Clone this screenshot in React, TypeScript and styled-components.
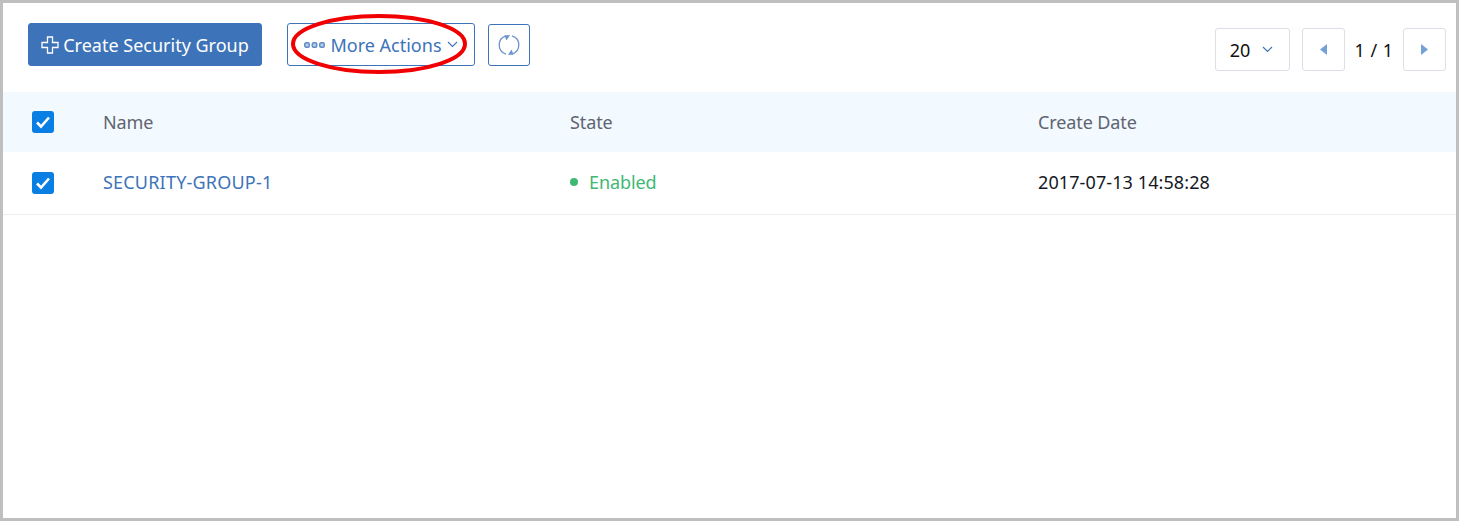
import * as React from 'react';
import styled, { createGlobalStyle } from 'styled-components';

const GlobalStyle = createGlobalStyle`
	html, body {
		margin: 0;
		padding: 0;
		background: #fff;
		font-family: 'Noto Sans', 'Open Sans', sans-serif;
	}
`;

const Page = styled.div`
	position: relative;
	box-sizing: border-box;
	width: 1459px;
	height: 521px;
	border: 3px solid #bfbfbf;
	overflow: hidden;
`;

const Toolbar = styled.div`
	display: flex;
	align-items: flex-start;
	height: 89px;
	box-sizing: border-box;
	padding: 20px 10px 0 25px;
`;

const BaseButton = styled.button`
	display: flex;
	align-items: center;
	justify-content: center;
	box-sizing: border-box;
	padding: 0;
	border-radius: 3px;
	font-family: inherit;
	font-size: 18px;
	letter-spacing: 0;
`;

const PrimaryButton = styled(BaseButton)`
	width: 234px;
	height: 43px;
	gap: 4px;
	background: #3d73b8;
	border: 1px solid #3d73b8;
	color: #fff;
`;

const OutlineButton = styled(BaseButton)`
	width: 188px;
	height: 43px;
	margin-left: 25px;
	gap: 5px;
	background: #fff;
	border: 1px solid #3d73b8;
	color: #3d73b8;
`;

const RefreshButton = styled(BaseButton)`
	width: 42px;
	height: 42px;
	margin: 1px 0 0 13px;
	background: #fff;
	border: 1px solid #3d73b8;
`;

const Pager = styled.div`
	display: flex;
	align-items: center;
	margin: 5px 0 0 auto;
`;

const PageSize = styled(BaseButton)`
	width: 75px;
	height: 43px;
	gap: 12px;
	padding-right: 2px;
	margin-right: 12px;
	background: #fff;
	border: 1px solid #dcdfe6;
	color: #111;
`;

const PageButton = styled(BaseButton)`
	width: 43px;
	height: 43px;
	background: #fff;
	border: 1px solid #dcdfe6;
`;

const PageCount = styled.span`
	width: 58px;
	text-align: center;
	font-size: 18px;
	letter-spacing: 0.5px;
	color: #111;
`;

const Row = styled.div<{ $head?: boolean }>`
	display: grid;
	grid-template-columns: 100px 467px 468px 1fr;
	align-items: center;
	box-sizing: border-box;
	height: ${(p) => (p.$head ? '60px' : '63px')};
	padding-bottom: ${(p) => (p.$head ? '0' : '2px')};
	background: ${(p) => (p.$head ? '#f2f9ff' : '#fff')};
	border-bottom: ${(p) => (p.$head ? 'none' : '1px solid #eeeeee')};
	font-size: 18px;
	letter-spacing: -0.1px;
`;

const CheckCell = styled.div<{ $body?: boolean }>`
	padding-left: 29px;
	display: flex;
	margin-top: ${(p) => (p.$body ? '2px' : '0')};
`;

const CheckBox = styled.span`
	display: flex;
	align-items: center;
	justify-content: center;
	width: 22px;
	height: 22px;
	border-radius: 3px;
	background: #0a7fe3;
`;

const HeadCell = styled.div`
	color: #5f6470;
`;

const NameLink = styled.a`
	color: #3d73b8;
	text-decoration: none;
	letter-spacing: 0.2px;
`;

const StateCell = styled.div`
	display: flex;
	align-items: center;
	gap: 11px;
	color: #3fb873;
`;

const Dot = styled.span`
	width: 8px;
	height: 8px;
	border-radius: 50%;
	background: #3fb873;
`;

const DateCell = styled.div`
	color: #14181f;
	letter-spacing: 0.1px;
`;

const Annotation = styled.svg`
	position: absolute;
	left: 285px;
	top: 8px;
	pointer-events: none;
`;

const Check = () => (
	<svg width="16" height="14" viewBox="0 0 16 14" fill="none">
		<path d="M2 7.5L6 11.5L14 2.5" stroke="#fff" strokeWidth="2.6" />
	</svg>
);

const Chevron = () => (
	<svg width="11" height="7" viewBox="0 0 11 7" fill="none">
		<path d="M1 1L5.5 5.5L10 1" stroke="#3d73b8" strokeWidth="1.1" />
	</svg>
);

const App = () => (
	<Page>
		<GlobalStyle />
		<Toolbar>
			<PrimaryButton>
				<svg width="18" height="18" viewBox="0 0 18 18" fill="none">
					<path d="M6.5 1H11.5V6.5H17V11.5H11.5V17H6.5V11.5H1V6.5H6.5Z" stroke="#fff" strokeWidth="1.3" />
				</svg>
				Create Security Group
			</PrimaryButton>
			<OutlineButton>
				<svg width="21" height="6" viewBox="0 0 21 6">
					<rect x="0.7" y="0.7" width="4.6" height="4.6" rx="1.5" fill="#b4cbe8" stroke="#5f8ac4" strokeWidth="1.4" />
					<rect x="8.2" y="0.7" width="4.6" height="4.6" rx="1.5" fill="#b4cbe8" stroke="#5f8ac4" strokeWidth="1.4" />
					<rect x="15.7" y="0.7" width="4.6" height="4.6" rx="1.5" fill="#b4cbe8" stroke="#5f8ac4" strokeWidth="1.4" />
				</svg>
				More Actions
				<Chevron />
			</OutlineButton>
			<RefreshButton>
				<svg width="22" height="22" viewBox="0 0 22 22" fill="none">
					<path d="M8 1.9A9.5 9.5 0 0 0 8 20.1" stroke="#6a94cb" strokeWidth="1.3" />
					<path d="M14 20.1A9.5 9.5 0 0 0 14 1.9" stroke="#6a94cb" strokeWidth="1.3" />
					<path d="M6.5 1.5L12 1L8.5 6.5Z" fill="#6a94cb" />
					<path d="M15.5 20.5L10 21L13.5 15.5Z" fill="#6a94cb" />
				</svg>
			</RefreshButton>
			<Pager>
				<PageSize>
					20
					<Chevron />
				</PageSize>
				<PageButton>
					<svg width="7" height="11" viewBox="0 0 7 11">
						<path d="M7 0V11L0 5.5Z" fill="#75a0d6" />
					</svg>
				</PageButton>
				<PageCount>1 / 1</PageCount>
				<PageButton>
					<svg width="7" height="11" viewBox="0 0 7 11">
						<path d="M0 0V11L7 5.5Z" fill="#75a0d6" />
					</svg>
				</PageButton>
			</Pager>
		</Toolbar>
		<Row $head>
			<CheckCell>
				<CheckBox>
					<Check />
				</CheckBox>
			</CheckCell>
			<HeadCell>Name</HeadCell>
			<HeadCell>State</HeadCell>
			<HeadCell>Create Date</HeadCell>
		</Row>
		<Row>
			<CheckCell $body>
				<CheckBox>
					<Check />
				</CheckBox>
			</CheckCell>
			<div>
				<NameLink>SECURITY-GROUP-1</NameLink>
			</div>
			<StateCell>
				<Dot />
				Enabled
			</StateCell>
			<DateCell>2017-07-13 14:58:28</DateCell>
		</Row>
		<Annotation width="184" height="66" viewBox="0 0 184 66" fill="none">
			<ellipse cx="91" cy="33" rx="86" ry="28" stroke="#f00000" strokeWidth="4" />
		</Annotation>
	</Page>
);

export default App;
